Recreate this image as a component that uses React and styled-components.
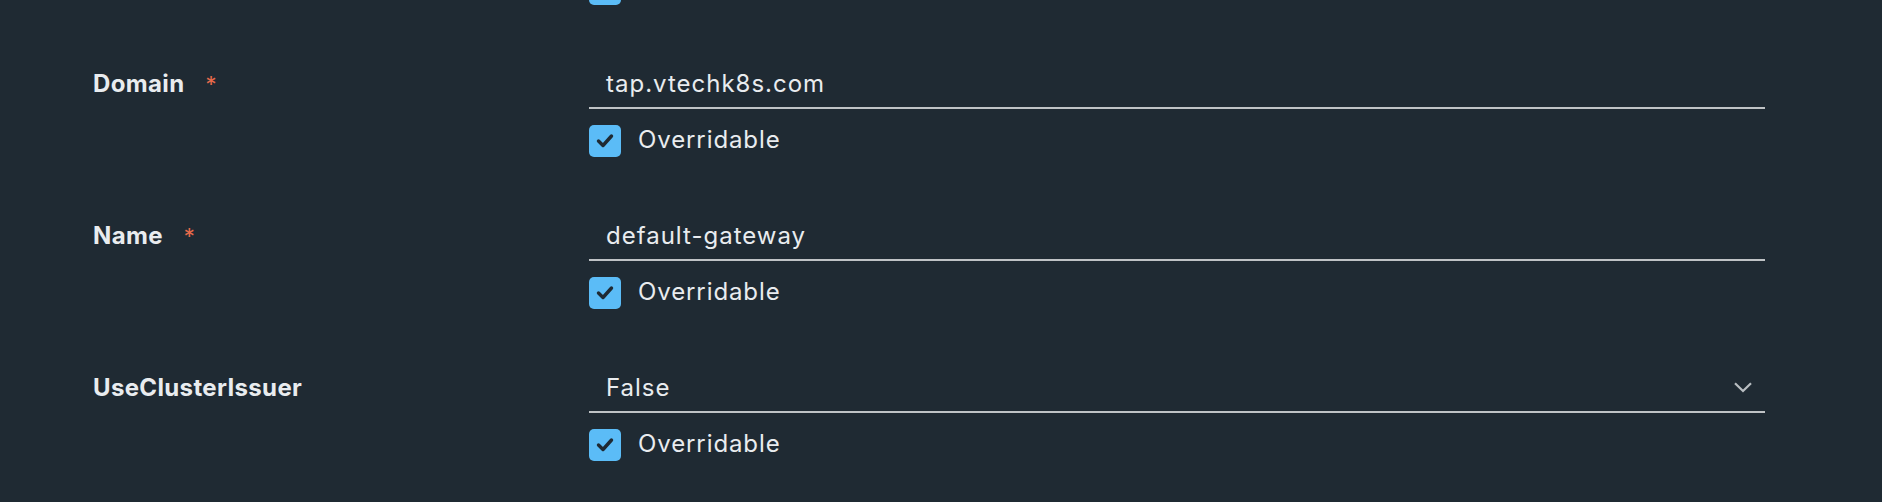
import styled, { createGlobalStyle } from 'styled-components'

const GlobalStyle = createGlobalStyle`
  html, body {
    margin: 0;
    padding: 0;
    background: #1f2a33;
  }
  body {
    font-family: Inter, "Noto Sans", sans-serif;
    color: #e9ecef;
  }
`

const Page = styled.div`
  height: 100vh;
  overflow: hidden;
  padding: 0 117px 0 93px;
  box-sizing: border-box;
`

const Form = styled.div`
  display: flex;
  flex-direction: column;
  gap: 55px;
  margin-top: -27px;
`

const Row = styled.div`
  display: grid;
  grid-template-columns: 496px 1fr;
`

const Label = styled.div`
  height: 47px;
  display: flex;
  align-items: center;
  font-size: 24px;
  font-weight: 700;
  letter-spacing: 0.35px;
  color: #e9ecef;
`

const Required = styled.span`
  color: #e86a4b;
  font-size: 22px;
  font-weight: 400;
  margin-left: 21px;
  align-self: flex-start;
  margin-top: 11px;
`

const Control = styled.div`
  display: flex;
  flex-direction: column;
`

const Field = styled.div`
  height: 47px;
  border-bottom: 2px solid #bfc3c6;
  padding: 0 13px 0 17px;
  display: flex;
  align-items: center;
  justify-content: space-between;
  font-size: 24px;
  letter-spacing: 1px;
  color: #e9ecef;
`

const CheckRow = styled.label`
  display: flex;
  align-items: center;
  gap: 17px;
  height: 32px;
  margin-top: 16px;
  font-size: 24px;
  letter-spacing: 0.9px;
  color: #e9ecef;
`

const CheckText = styled.span`
  padding-bottom: 3px;
`

const Box = styled.span`
  width: 32px;
  height: 32px;
  border-radius: 5px;
  background: #5bbcf7;
  display: flex;
  align-items: center;
  justify-content: center;
  flex-shrink: 0;
`

const Chevron = () => (
  <svg width="18" height="11" viewBox="0 0 18 11" fill="none">
    <path d="M1 1.2 L9 9 L17 1.2" stroke="#b9bec2" strokeWidth="2.2" />
  </svg>
)

const Check = () => (
  <Box>
    <svg width="32" height="32" viewBox="0 0 32 32" fill="none">
      <path d="M9.5 16 L14 20.5 L22.5 11" stroke="#1f2a33" strokeWidth="3.4" strokeLinecap="round" strokeLinejoin="round" />
    </svg>
  </Box>
)

const Overridable = () => (
  <CheckRow>
    <Check />
    <CheckText>Overridable</CheckText>
  </CheckRow>
)

const fields = [
  { label: 'Domain', value: 'tap.vtechk8s.com', required: true },
  { label: 'Name', value: 'default-gateway', required: true },
  { label: 'UseClusterIssuer', value: 'False', select: true },
]

const App = () => (
  <Page>
    <GlobalStyle />
    <Form>
      <Row>
        <div />
        <Control>
          <Check />
        </Control>
      </Row>
      {fields.map(f => (
        <Row key={f.label}>
          <Label>
            {f.label}
            {f.required && <Required>*</Required>}
          </Label>
          <Control>
            <Field>
              <span>{f.value}</span>
              {f.select && <Chevron />}
            </Field>
            <Overridable />
          </Control>
        </Row>
      ))}
    </Form>
  </Page>
)

export default App
